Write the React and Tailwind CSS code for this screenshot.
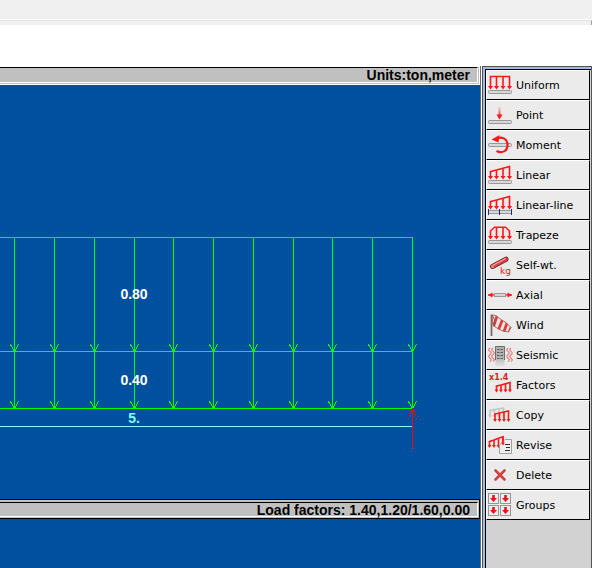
const RED = "#fb1818";

function Beam({ x = 1, y = 19, width = 24 }) {
  return <rect x={x + 0.5} y={y + 0.5} width={width - 1} height="3" rx="1" fill="#d8d8d8" stroke="#979797" />;
}

function Arrow({ x, from, to, color = RED, head = 2.5 }) {
  return (
    <g>
      <path d={`M${x} ${from}V${to - 1}`} stroke={color} strokeWidth="1.6" />
      <path d={`M${x - head} ${to - head - 0.5}h${head * 2}L${x} ${to + 0.5}z`} fill={color} />
    </g>
  );
}

function SlopedLoad({ xs, tops, bottom, color = RED, head }) {
  const line = xs.map((x, i) => `${i ? "L" : "M"}${x} ${tops[i]}`).join("");
  return (
    <g>
      <path d={line} fill="none" stroke={color} strokeWidth="1.5" strokeLinecap="square" />
      {xs.map((x, i) => (
        <Arrow key={x} x={x} from={tops[i]} to={bottom} color={color} head={head} />
      ))}
    </g>
  );
}

const COLS = [3.5, 9.5, 16, 22.5];
const WAVE = "q-2.5 1.7 0 3.4t0 3.4t0 3.4t0 3.4";

const ICONS = {
  uniform: (
    <>
      <SlopedLoad xs={COLS} tops={[5.5, 5.5, 5.5, 5.5]} bottom={18} />
      <Beam />
    </>
  ),
  point: (
    <>
      <defs>
        <linearGradient id="pointFade" x1="0" y1="0" x2="0" y2="1">
          <stop offset="0" stopColor={RED} stopOpacity="0.1" />
          <stop offset="1" stopColor={RED} />
        </linearGradient>
      </defs>
      <rect x="11.5" y="6" width="2" height="10" fill="url(#pointFade)" />
      <path d="M9.5 13.5h6l-3 5z" fill={RED} />
      <Beam />
    </>
  ),
  moment: (
    <>
      <Beam y={12} />
      <path d="M10 7.5C14 5.5 20.5 7 20.5 14C20.5 20.5 15 22.5 9.5 20" fill="none" stroke={RED} strokeWidth="2.2" />
      <path d="M4.5 8.5L12.5 4L11.5 11.5z" fill={RED} />
    </>
  ),
  linear: (
    <>
      <SlopedLoad xs={COLS} tops={[10.5, 9, 7.2, 5.5]} bottom={18} />
      <Beam />
    </>
  ),
  linearLine: (
    <>
      <SlopedLoad xs={COLS} tops={[10.5, 9, 7.2, 5.5]} bottom={18} />
      <Beam />
      <path d="M1.5 18v6M12.5 18v6M24.5 18v6" stroke="#26268c" />
    </>
  ),
  trapeze: (
    <>
      <path d="M3.5 10L7.5 6.3H18.5L22.5 10" fill="none" stroke={RED} strokeWidth="1.5" />
      <Arrow x={3.5} from={9.5} to={18} />
      <Arrow x={9.5} from={6.3} to={18} />
      <Arrow x={16} from={6.3} to={18} />
      <Arrow x={22.5} from={9.5} to={18} />
      <Beam />
    </>
  ),
  selfWeight: (
    <>
      <path d="M5.5 15.5L19 8.2" stroke="#8f2020" strokeWidth="5" strokeLinecap="round" />
      <path d="M5.5 15.5L19 8.2" stroke="#cf4848" strokeWidth="3.4" strokeLinecap="round" />
      <path d="M5.5 14.5L19 7.2" stroke="#f0a2a2" strokeWidth="1.2" />
      <circle cx="5.5" cy="15.5" r="1.5" fill="#d98a8a" />
      <text x="13" y="23" fill="#e81212" fontSize="9">kg</text>
    </>
  ),
  axial: (
    <>
      <path d="M1 14h24" stroke={RED} strokeWidth="1.3" />
      <rect x="7.5" y="12.5" width="11" height="3" fill="#d4d4d4" stroke="#9a9a9a" />
      <path d="M1 14L5.5 11.5V16.5zM25 14L20.5 11.5V16.5z" fill={RED} />
    </>
  ),
  wind: (
    <>
      <defs>
        <clipPath id="sockShape">
          <path d="M5 4Q9 3.5 12 7Q15 9.5 19 11.5L24 16.5L21.5 21Q15 20.5 11.5 18L6 14.5z" />
        </clipPath>
      </defs>
      <path d="M4.5 3.5V25" stroke="#7d6666" strokeWidth="1.8" />
      <g clipPath="url(#sockShape)">
        <path d="M3 2h23v21H3z" fill="#f5e6e3" />
        <path d="M11 2L6 17M16.5 6L11 20M21 9L16.5 22M25 14L21.5 23" stroke="#d8423d" strokeWidth="2.8" />
      </g>
      <path d="M5 4Q9 3.5 12 7Q15 9.5 19 11.5L24 16.5L21.5 21Q15 20.5 11.5 18L6 14.5z" fill="none" stroke="#9c4a46" strokeWidth="0.8" />
      <path d="M5.5 4.5Q8.5 8 7.5 15" fill="none" stroke="#9c4a46" />
    </>
  ),
  seismic: (
    <>
      <defs>
        <linearGradient id="towerFade" x1="0" y1="0" x2="0" y2="1">
          <stop offset="0.5" stopColor="#b0b0b0" />
          <stop offset="1" stopColor="#e4e4e4" />
        </linearGradient>
      </defs>
      <rect x="8.5" y="5.5" width="9" height="20" fill="url(#towerFade)" />
      <path d="M8.5 19V5.5H17.5V19" fill="none" stroke="#6c6c6c" />
      <path d="M10 8.5h6M10 11.5h6M10 14.5h6M10 17.5h6" stroke="#606060" strokeDasharray="2.5 1" />
      <path d={`M3 7${WAVE}M6 7${WAVE}M21 7${WAVE}M24 7${WAVE}`} fill="none" stroke="#e87575" strokeWidth="1.1" />
    </>
  ),
  factors: (
    <>
      <text x="2" y="9" fill="#e02020" fontSize="8" fontWeight="bold">x1.4</text>
      <SlopedLoad xs={[9.5, 14, 18.5, 23]} tops={[15, 14, 12.7, 11.5]} bottom={21} head={1.9} />
    </>
  ),
  copy: (
    <>
      <SlopedLoad xs={[3, 7.5, 12, 16.5]} tops={[9.5, 8.6, 7.7, 7]} bottom={16.5} color="#c4c4c4" head={1.9} />
      <SlopedLoad xs={[8, 12.5, 17, 21.5]} tops={[13, 12, 11, 10]} bottom={20.5} head={1.9} />
    </>
  ),
  revise: (
    <>
      <SlopedLoad xs={[2.5, 7, 11.5, 16]} tops={[10.5, 9, 7.2, 5.8]} bottom={16.5} head={1.9} />
      <path d="M15 11.5L18 8.5H24.5V22.5H12.5V14z" fill="#eeeeee" stroke="#a0a0a0" />
      <Arrow x={16} from={5.8} to={14} head={1.9} />
      <path d="M18 13.5h5M19 16.5h4M18 19.5h5" stroke="#333333" strokeWidth="1.2" />
    </>
  ),
  remove: <path d="M8.5 9.5L17.5 18.5M17.5 9.5L8.5 18.5" stroke="#cd4141" strokeWidth="2.6" strokeLinecap="round" />,
  groups: (
    <>
      {[[1, 2], [13, 2], [1, 14], [13, 14]].map(([x, y]) => (
        <g key={`${x}-${y}`} transform={`translate(${x} ${y})`}>
          <rect x="0.5" y="0.5" width="10" height="10" fill="#f0eded" stroke="#989494" />
          <path d="M4.2 2h2.6v3h2.2L5.5 9L2 5h2.2z" fill="#ea1020" />
        </g>
      ))}
    </>
  ),
};

const TOOLS = [
  ["Uniform", "uniform"],
  ["Point", "point"],
  ["Moment", "moment"],
  ["Linear", "linear"],
  ["Linear-line", "linearLine"],
  ["Trapeze", "trapeze"],
  ["Self-wt.", "selfWeight"],
  ["Axial", "axial"],
  ["Wind", "wind"],
  ["Seismic", "seismic"],
  ["Factors", "factors"],
  ["Copy", "copy"],
  ["Revise", "revise"],
  ["Delete", "remove"],
  ["Groups", "groups"],
];

function ToolButton({ label, icon }) {
  return (
    <button
      type="button"
      className="flex h-[30px] w-full items-center gap-[3px] border border-t-white border-l-white border-r-black border-b-black bg-[#ebebeb] text-left text-[11px] text-black"
    >
      <svg width="26" height="28" viewBox="0 0 26 28" className="shrink-0" aria-hidden="true">
        {ICONS[icon]}
      </svg>
      <span className="pt-0.5">{label}</span>
    </button>
  );
}

const LOAD_X = [14, 54, 94, 134, 173, 213, 253, 293, 332, 372, 412];

function LoadDiagram() {
  return (
    <svg width="480" height="414" viewBox="0 85 480 414" className="shrink-0" role="img" aria-label="Beam loads">
      <g stroke="#00ff00" fill="none" shapeRendering="crispEdges">
        <path d="M0 237.5H413M0 351.5H413M0 408.5H413" />
        {LOAD_X.map((x) => (
          <path
            key={x}
            d={`M${x + 0.5} 237V408M${x - 3.5} 344.5l4 7l4 -7M${x - 3.5} 401.5l4 7l4 -7`}
          />
        ))}
      </g>
      <path d="M0 426.5H412" stroke="#80ffff" shapeRendering="crispEdges" />
      <path d="M412.5 409V449M408.5 417l4 -8l4 8" stroke="#ff0000" fill="none" shapeRendering="crispEdges" />
      <g className="font-['Liberation_Sans',Arial,sans-serif] text-[14px] font-bold" textAnchor="middle">
        <text x="134" y="299" fill="#ffffff">0.80</text>
        <text x="134" y="385" fill="#ffffff">0.40</text>
        <text x="134" y="423" fill="#80ffff">5.</text>
      </g>
    </svg>
  );
}

export default function App() {
  return (
    <div className="flex min-h-screen flex-col bg-white font-['DejaVu_Sans',Verdana,sans-serif]">
      <header className="flex h-[25px] flex-col bg-[#f0f0f0]">
        <div className="h-5 border-b border-white" />
        <div className="flex-1 border-t border-r border-t-[#e3e3e3] border-r-[#a0a0a0]" />
      </header>

      <div className="mt-[41px] flex flex-1">
        <main className="flex min-w-0 flex-1 flex-col border-r border-[#696969] bg-[#0050a0]">
          <div className="bg-white pt-px">
            <div className="border-r border-b border-white bg-[#c0c0c0] pr-px pb-px">
              <div className="h-4 border-t border-r border-b border-t-black border-r-white border-b-white pr-[7px] text-right font-['Liberation_Sans',Arial,sans-serif] text-[14px] leading-[15px] font-bold text-black">
                Units:ton,meter
              </div>
            </div>
          </div>
          <div className="flex justify-end overflow-hidden">
            <LoadDiagram />
          </div>
          <div className="border-y border-r border-black bg-[#c0c0c0] pt-0.5 pr-px pb-px">
            <div className="h-[15px] border-t border-r border-b border-t-black border-r-white border-b-white pr-[7px] text-right font-['Liberation_Sans',Arial,sans-serif] text-[14px] leading-[15px] font-bold text-black">
              Load factors: 1.40,1.20/1.60,0.00
            </div>
          </div>
        </main>

        <aside className="flex w-[111px] shrink-0 border-l border-white">
          <div className="flex flex-1 border-t border-r border-l border-[#555555]">
            <div className="flex flex-1 border-t-2 border-l-2 border-[#a5b8e4]">
              <nav aria-label="Loads" className="flex-1 border-t border-l border-black bg-[#d2d2d2] pr-px">
                {TOOLS.map(([label, icon]) => (
                  <ToolButton key={label} label={label} icon={icon} />
                ))}
              </nav>
            </div>
          </div>
        </aside>
      </div>
    </div>
  );
}
